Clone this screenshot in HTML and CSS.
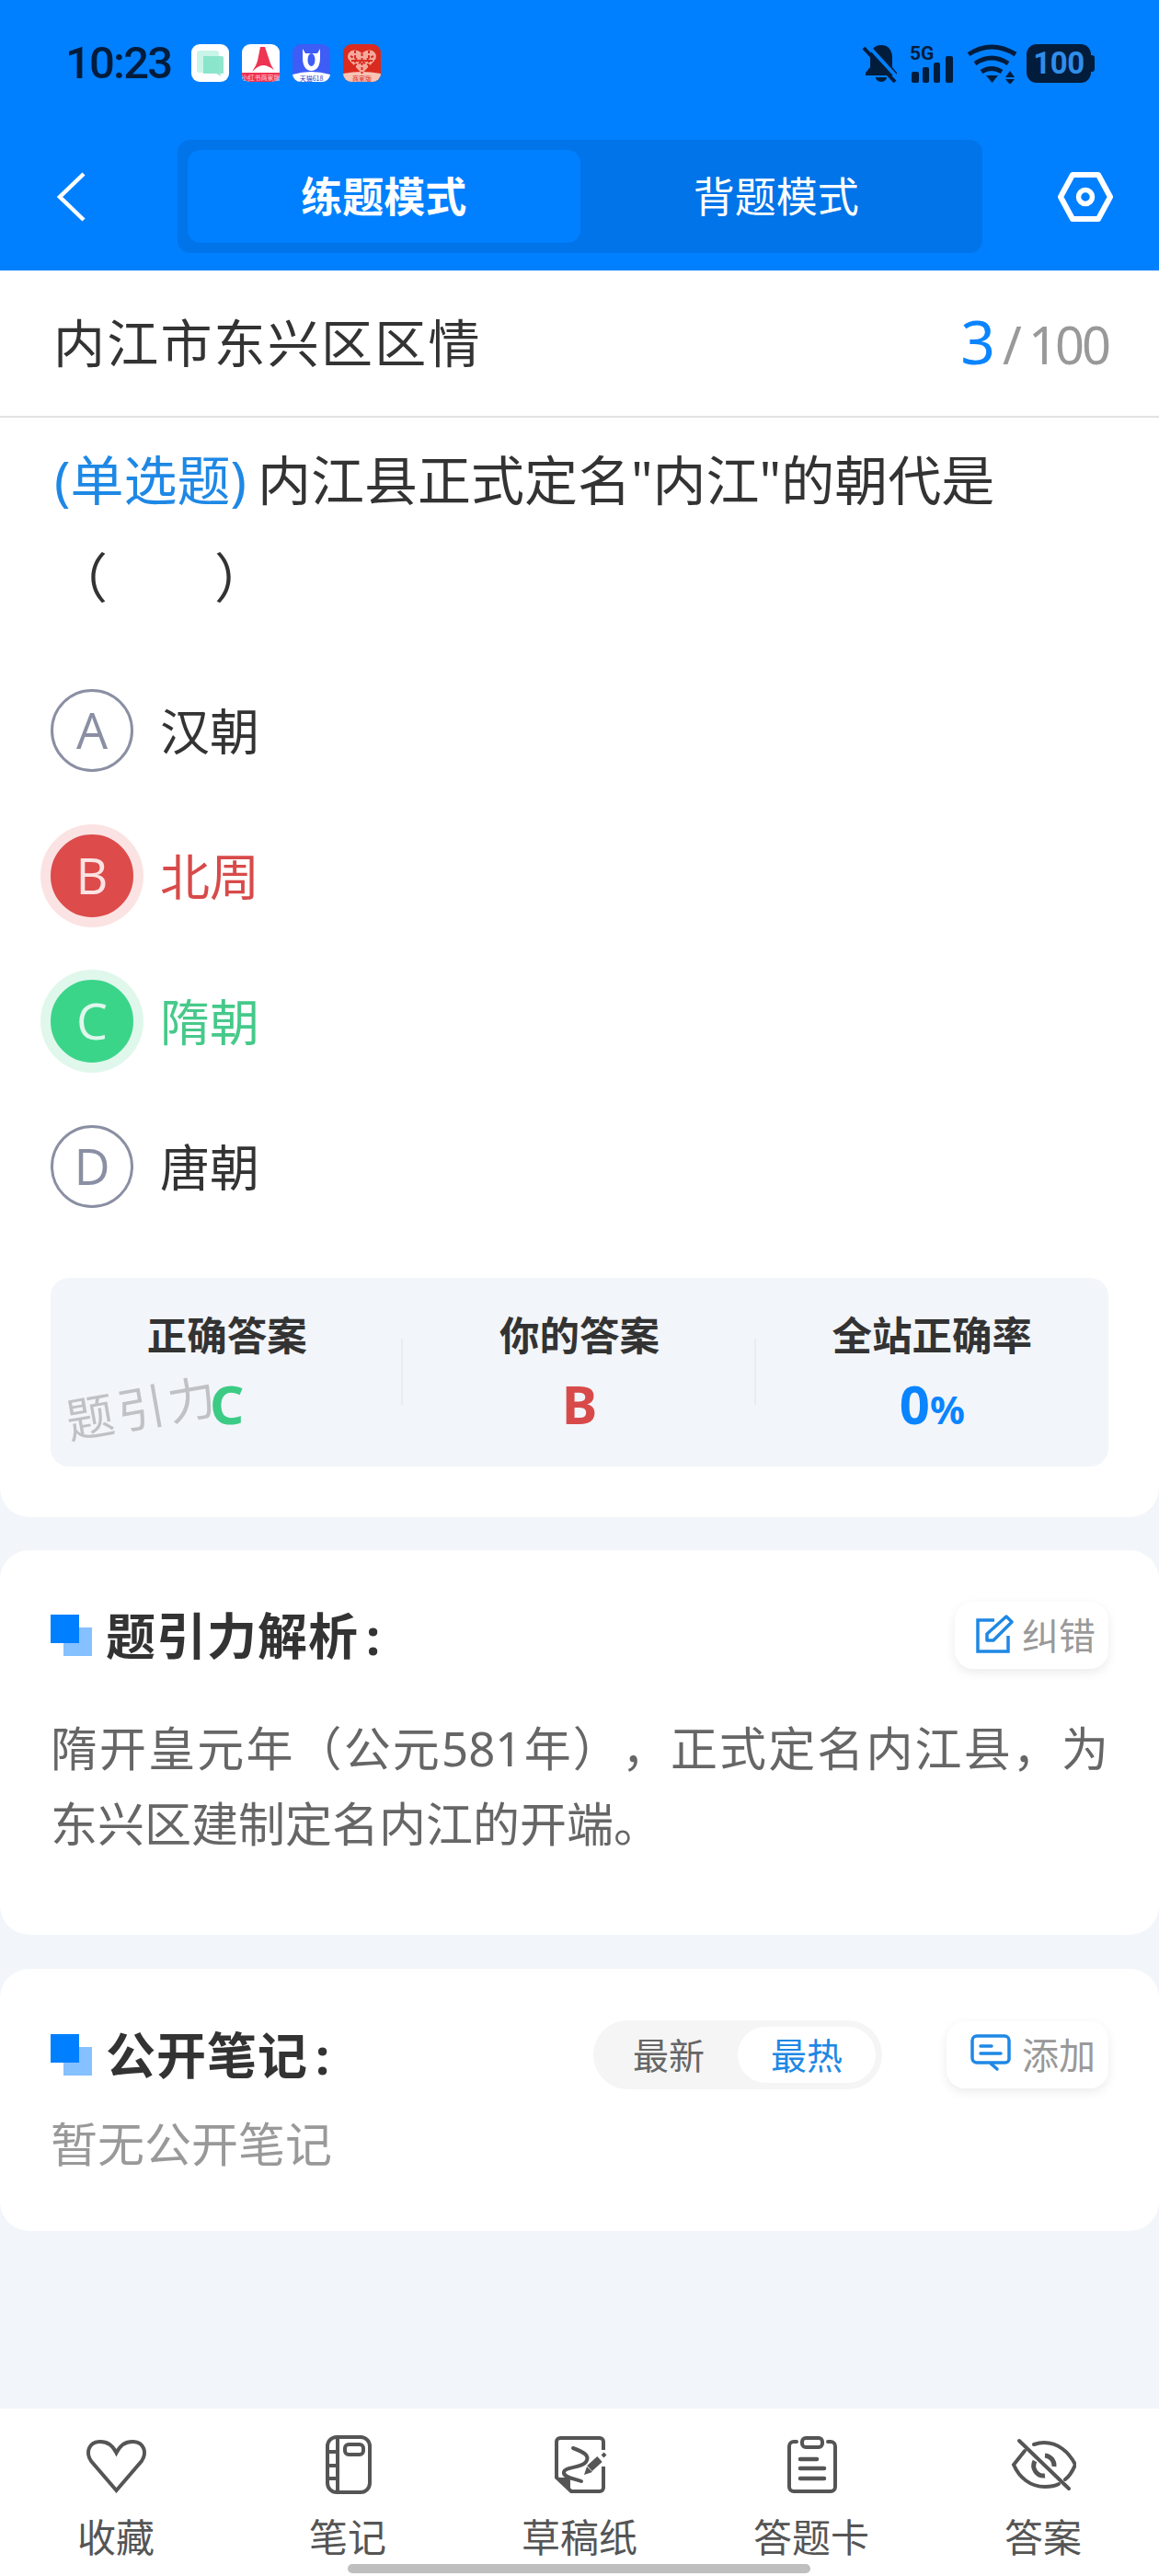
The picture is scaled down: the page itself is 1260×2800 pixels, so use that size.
FILE: index.html

```html
<!DOCTYPE html>
<html lang="zh-CN">
<head>
    <meta charset="UTF-8">
    <meta name="viewport" content="width=device-width, initial-scale=1.0">
    <title>练题模式</title>
    <link rel="stylesheet" href="styles.css">
</head>
<body>

    <!-- BLUE HEADER -->
    <header class="header">
        <div class="status">
            <span class="time">10:23</span>
            <div class="apps">
                <svg class="app" viewBox="0 0 41 41"><rect width="41" height="41" rx="9" fill="#fff"/><rect x="6" y="7" width="24" height="24" rx="3" fill="#c9f5e8"/><path d="M13 13h20a2 2 0 0 1 2 2v17h-4l2 3-6-3H13z" fill="#7fe2c5" opacity=".85"/></svg>
                <svg class="app" viewBox="0 0 41 41"><rect width="41" height="41" rx="9" fill="#fff"/><path d="M0 31h41v1a9 9 0 0 1-9 9H9a9 9 0 0 1-9-9z" fill="#f0304f"/><path d="M20 3h5l5 15c1 4 3 7 5 10-4-3-8-5-12-5-4 0-8 3-12 7 3-5 5-8 6-12z" fill="#ef3352"/><text x="20.500" y="39" class="app-label" fill="#ffd5dc">小红书商家版</text></svg>
                <svg class="app" viewBox="0 0 41 41"><rect width="41" height="41" rx="9" fill="#3e5cf6"/><path d="M0 33q20-6 41 0v0a9 9 0 0 1-9 8H9a9 9 0 0 1-9-8z" fill="#fff"/><path d="M11 5l3 5h13l3-5v10c0 9-4 14-9.500 14S11 24 11 15z" fill="#fff"/><ellipse cx="20.500" cy="17" rx="4" ry="7" fill="#3e5cf6"/><text x="20.500" y="39.500" class="app-label" fill="#2740c8">天猫618</text></svg>
                <svg class="app" viewBox="0 0 41 41"><rect width="41" height="41" rx="9" fill="#d92b1f"/><path d="M0 32q20-4 41 0a9 9 0 0 1-9 9H9a9 9 0 0 1-9-9z" fill="#f7c4b6"/><path d="M20.500 32L6 17C2 9 12 2 20.500 10 29 2 39 9 35 17z" fill="#f4a99c"/><path d="M20.500 10v22M8 13l25 12M33 13L8 25M4 18h33M13 7v18M28 7v18" stroke="#d92b1f" stroke-width="2" stroke-dasharray="3 2"/><text x="20.500" y="39.500" class="app-label" fill="#d92b1f">商家版</text></svg>
            </div>
            <div class="status-right">
                <svg class="bell" viewBox="0 0 42 44"><path d="M21 2c-8 0-12 6-12 14v10l-5 6v3h34v-3l-5-6V16c0-8-4-14-12-14zM15 37a6 5 0 0 0 12 0z" fill="#021c3c"/><path d="M7 3l33 36" stroke="#0080ff" stroke-width="4"/><path d="M2 5l34 37" stroke="#021c3c" stroke-width="4"/></svg>
                <svg class="signal" viewBox="0 0 52 44"><text x="1" y="18" class="signal-label">5G</text><rect x="3" y="31" width="8" height="12" rx="2"/><rect x="15" y="26" width="7" height="17" rx="2"/><rect x="27" y="21" width="7" height="22" rx="2"/><rect x="40" y="14" width="8" height="29" rx="2"/></svg>
                <svg class="wifi" viewBox="0 0 58 44"><g fill="none" stroke="#021c3c" stroke-width="5"><path d="M3 12q25-16 51 0"/><path d="M10 22q18-12 36 0"/><path d="M17 31q11-7 22 0"/></g><path d="M22 35h13l-6.500 8zM43 37l5-7 5 7zM43 39h10l-5 6z" fill="#021c3c"/></svg>
                <div class="battery">100</div>
            </div>
        </div>
        <nav class="nav">
            <svg class="back" viewBox="0 0 32 56"><polyline points="29,3 3,28 29,53" fill="none" stroke="#fff" stroke-width="4.500"/></svg>
            <div class="tabs">
                <div class="tab active">练题模式</div>
                <div class="tab">背题模式</div>
            </div>
            <svg class="setting" viewBox="0 0 60 56"><path d="M16 4h28l13 24-13 24H16L3 28z" fill="none" stroke="#fff" stroke-width="6" stroke-linejoin="round"/><circle cx="30" cy="28" r="7.500" fill="none" stroke="#fff" stroke-width="5.500"/></svg>
        </nav>
    </header>

    <main class="main">
        <!-- QUESTION -->
        <section class="card question-card">
            <div class="subject">
                <h1>内江市东兴区区情</h1>
                <p class="progress"><b>3</b><span>/</span>100</p>
            </div>
            <p class="question"><span class="q-type">(单选题)</span> 内江县正式定名"内江"的朝代是（　　）</p>

            <div class="option"><span class="mark">A</span><span class="option-text">汉朝</span></div>
            <div class="option wrong"><span class="mark">B</span><span class="option-text">北周</span></div>
            <div class="option right"><span class="mark">C</span><span class="option-text">隋朝</span></div>
            <div class="option"><span class="mark">D</span><span class="option-text">唐朝</span></div>

            <div class="stats">
                <div class="stat">
                    <p class="stat-name">正确答案</p>
                    <p class="stat-value green">C</p>
                </div>
                <div class="stat">
                    <p class="stat-name">你的答案</p>
                    <p class="stat-value red">B</p>
                </div>
                <div class="stat">
                    <p class="stat-name">全站正确率</p>
                    <p class="stat-value blue">0<small>%</small></p>
                </div>
                <span class="watermark">题引力</span>
            </div>
        </section>

        <!-- ANALYSIS -->
        <section class="card block analysis">
            <div class="block-head">
                <svg class="squares" viewBox="0 0 45 45"><rect x="14" y="14" width="31" height="31" fill="#85c0ff"/><rect width="31" height="31" fill="#0080ff"/></svg>
                <h2>题引力解析<span class="colon">:</span></h2>
                <div class="chip">
                    <svg class="chip-icon" viewBox="0 0 44 44"><path d="M21 7H3v34h33V24" fill="none" stroke="#1e88e5" stroke-width="3.500"/><path d="M13 29v-7L34 3l6 6-20 20z" fill="none" stroke="#1e88e5" stroke-width="3.500" stroke-linejoin="round"/></svg>
                    纠错
                </div>
            </div>
            <p class="analysis-text">隋开皇元年（公元581年），正式定名内江县，为东兴区建制定名内江的开端。</p>
        </section>

        <!-- NOTES -->
        <section class="card block notes">
            <div class="block-head">
                <svg class="squares" viewBox="0 0 45 45"><rect x="14" y="14" width="31" height="31" fill="#85c0ff"/><rect width="31" height="31" fill="#0080ff"/></svg>
                <h2>公开笔记<span class="colon">:</span></h2>
                <div class="sort">
                    <span>最新</span>
                    <span class="on">最热</span>
                </div>
                <div class="chip chip-add">
                    <svg class="chip-icon" viewBox="0 0 46 44"><path d="M8 3h30a5 5 0 0 1 5 5v20a4 4 0 0 1-4 4H22l8 7M20 32H8a5 5 0 0 1-5-5V8a5 5 0 0 1 5-5" fill="none" stroke="#1e88e5" stroke-width="3.500" stroke-linecap="round"/><path d="M12 14h12M12 22h22" stroke="#1e88e5" stroke-width="3.500" stroke-linecap="round"/></svg>
                    添加
                </div>
            </div>
            <p class="empty">暂无公开笔记</p>
        </section>
    </main>

    <!-- BOTTOM BAR -->
    <footer class="bar">
        <div class="bar-item">
            <svg viewBox="0 0 72 66"><path d="M36.500 62L9 30C3 21 6 10 18 9c9-.500 15 5 18.500 12C40 14 46 8.500 55 9c12 1 15 12 9 21z"/></svg>
            收藏
        </div>
        <div class="bar-item">
            <svg viewBox="0 0 72 66"><rect x="14" y="4" width="46" height="60" rx="10"/><path d="M25 4v60M14 20h11M14 35h11M14 49h11"/><rect x="33" y="12" width="20" height="11" rx="4"/></svg>
            笔记
        </div>
        <div class="bar-item">
            <svg viewBox="0 0 72 66"><path d="M62 18V9a4 4 0 0 0-4-4H15a4 4 0 0 0-4 4v39l16 15h31a4 4 0 0 0 4-4V36"/><path class="solid" d="M11 48h11a4 4 0 0 1 4 4v10z"/><path d="M29 16c11 4 19 8 14 15s-23 5-24 11 11 7 19 10" stroke-linecap="round"/><path d="M47 38l11-10" stroke-width="8"/><path class="solid" d="M41 45l3-9 6 6z"/><path d="M61 25l3-3"/></svg>
            草稿纸
        </div>
        <div class="bar-item">
            <svg viewBox="0 0 72 66"><path d="M20 9h-3a5 5 0 0 0-5 5v44a5 5 0 0 0 5 5h40a5 5 0 0 0 5-5V14a5 5 0 0 0-5-5h-3" stroke-linecap="round"/><rect x="26" y="5" width="22" height="10" rx="4"/><path d="M24 28h18M24 38h26M24 49h26" stroke-width="4.500" stroke-linecap="round"/></svg>
            答题卡
        </div>
        <div class="bar-item">
            <svg viewBox="0 0 72 66"><path d="M16 19L4 34c6 14 18 24 34 24 6 0 11-1 15-3" stroke-linecap="round"/><path d="M26 12c3-1 7-2 11-2 15 0 27 10 34 24-3 7-7 13-11 16" stroke-linecap="round"/><path d="M10 8l54 52" stroke-linecap="round"/><path d="M38 24a11 11 0 0 1 10 12M27 30a11 11 0 0 0 11 16" stroke-width="5"/></svg>
            答案
        </div>
        <span class="home-line"></span>
    </footer>

</body>
</html>
```

FILE: styles.css

```css
* { margin: 0; padding: 0; box-sizing: border-box; }
body {
    width: 1260px;
    height: 2800px;
    overflow: hidden;
    display: flex;
    flex-direction: column;
    background: #f2f5f9;
    color: #333;
    font-family: "Noto Sans", "Noto Sans CJK SC", sans-serif;
    text-spacing-trim: space-all;
}

/* header */
.header {
    height: 294px;
    background: #0080ff;
    padding-top: 48px;
}
.status {
    display: flex;
    align-items: center;
    height: 41px;
    padding: 0 70px 0 71px;
}
.time {
    width: 116px;
    font-family: Roboto, sans-serif;
    font-size: 49px;
    font-weight: 500;
    line-height: 41px;
    letter-spacing: -1.800px;
    color: #021c3c;
    white-space: nowrap;
}
.apps { display: flex; gap: 14px; margin-left: 21px; }
.app { width: 41px; height: 41px; display: block; }
.app-label { font-size: 7px; text-anchor: middle; font-family: "Noto Sans CJK SC", sans-serif; }
.status-right { display: flex; align-items: center; margin-left: auto; }
.bell { width: 42px; height: 44px; }
.signal { width: 52px; height: 44px; margin-left: 9px; fill: #021c3c; }
.signal-label { font-family: Roboto, sans-serif; font-size: 21px; font-weight: 700; }
.wifi { width: 58px; height: 44px; margin-left: 10px; }
.battery {
    position: relative;
    width: 70px;
    height: 42px;
    margin-left: 8px;
    margin-right: 4px;
    background: #021c3c;
    border-radius: 11px;
    color: #2f8eea;
    font-family: Roboto, sans-serif;
    font-size: 33px;
    font-weight: 700;
    line-height: 42px;
    text-align: center;
    letter-spacing: -.5px;
}
.battery::after {
    content: "";
    position: absolute;
    left: 70px;
    top: 12px;
    width: 4px;
    height: 18px;
    background: #021c3c;
    border-radius: 0 3px 3px 0;
}
.nav {
    display: flex;
    align-items: center;
    height: 123px;
    margin-top: 63px;
    padding: 0 50px 0 62px;
}
.back { width: 32px; height: 56px; }
.tabs {
    display: flex;
    width: 875px;
    height: 123px;
    margin-left: 99px;
    padding: 11px;
    background: #0074e8;
    border-radius: 14px;
}
.tab {
    flex: 1;
    border-radius: 14px;
    color: #fff;
    font-size: 45px;
    line-height: 101px;
    text-align: center;
}
.tab.active { background: #0080ff; font-weight: 700; }
.setting { width: 60px; height: 56px; margin-left: auto; }

/* cards */
.main { flex: 1; }
.card { background: #fff; border-radius: 0 0 32px 32px; }
.question-card { height: 1355px; }
.subject {
    display: flex;
    justify-content: space-between;
    align-items: center;
    height: 160px;
    padding: 0 55px 7px 58px;
    border-bottom: 2px solid #e2e2e2;
}
.subject h1 { font-size: 56px; font-weight: 400; letter-spacing: 2.200px; }
.progress { color: #999; font-size: 56px; letter-spacing: -3px; }
.progress b { color: #0a84ff; font-size: 66px; font-weight: 400; letter-spacing: 0; }
.progress span { margin: 0 10px 0 8px; }
.question {
    margin-bottom: 34px;
    padding: 15px 40px 0 59px;
    font-size: 58px;
    line-height: 106px;
    word-spacing: -3px;
}
.q-type { color: #1e88e5; }
.option {
    display: flex;
    align-items: center;
    height: 158px;
    padding-left: 55px;
    font-size: 54px;
    color: #333;
}
.option-text { padding-bottom: 4px; }
.mark {
    width: 90px;
    height: 90px;
    margin-right: 29px;
    border: 3px solid #8a8fa3;
    border-radius: 50%;
    color: #8a8fa3;
    font-family: "Open Sans", sans-serif;
    font-size: 54px;
    line-height: 82px;
    text-align: center;
}
.wrong { color: #d84a4a; }
.wrong .mark {
    background: #dd4b4b;
    border-color: #dd4b4b;
    color: #fbe3e3;
    box-shadow: 0 0 0 11px #fbe3e3;
}
.right { color: #46c98a; }
.right .mark {
    background: #3bd58a;
    border-color: #3bd58a;
    color: #dff7ec;
    box-shadow: 0 0 0 11px #e0f7ec;
}

/* answer summary */
.stats {
    position: relative;
    display: grid;
    grid-template-columns: repeat(3, 1fr);
    height: 205px;
    margin: 42px 55px 0;
    background: #f2f5f9;
    border-radius: 20px;
}
.stat { position: relative; padding-top: 32px; text-align: center; }
.stat + .stat::before {
    content: "";
    position: absolute;
    left: -2px;
    top: 66px;
    width: 2px;
    height: 72px;
    background: #e9ecf0;
}
.stat-name { font-size: 43.500px; font-weight: 700; line-height: 60px; }
.stat-value { margin-top: 10px; font-size: 58px; font-weight: 700; line-height: 70px; }
.stat-value small { font-size: 42px; }
.green { color: #3bcb85; }
.red { color: #d84a4a; }
.blue { color: #0a84ff; }
.watermark {
    position: absolute;
    left: 16px;
    top: 111px;
    color: #bfc1c4;
    font-size: 52px;
    letter-spacing: 4px;
    line-height: 60px;
    transform: rotate(-10deg);
}

.block { margin-top: 36px; padding: 56px 55px 0; border-radius: 32px; }
.analysis { height: 418px; }
.notes { height: 285px; margin-top: 37px; }
.block-head { display: flex; align-items: center; height: 73px; }
.notes .block-head { height: 75px; }
.squares { width: 45px; height: 45px; margin-right: 15px; }
.block-head h2 { padding-bottom: 4px; font-size: 54px; font-weight: 700; letter-spacing: 1px; }
.colon { margin-left: 8px; }
.chip {
    display: flex;
    align-items: center;
    height: 73px;
    margin-left: auto;
    padding: 0 14px 3px 22px;
    background: #fff;
    border-radius: 20px;
    box-shadow: 0 4px 12px rgba(0, 0, 0, 0.08);
    color: #999;
    font-size: 40px;
    white-space: nowrap;
}
.chip-icon { width: 44px; height: 44px; margin-right: 7px; }
.chip-add { margin-left: 70px; padding: 0 14px 3px 25px; }
.chip-add .chip-icon { width: 46px; margin-right: 11px; }
.analysis-text {
    margin-top: 45px;
    color: #666;
    font-size: 51px;
    line-height: 82px;
    text-align: justify;
}
.sort {
    display: flex;
    align-items: center;
    width: 314px;
    height: 75px;
    margin-left: auto;
    padding: 0 7px;
    background: #f5f5f5;
    border-radius: 38px;
    color: #666;
    font-size: 39px;
}
.sort span { flex: 1; line-height: 61px; text-align: center; border-radius: 31px; }
.sort .on { background: #fff; color: #1e88e5; }
.empty { margin-top: 29px; color: #999; font-size: 51px; line-height: 60px; }

/* bottom bar */
.bar {
    position: relative;
    display: grid;
    grid-template-columns: repeat(5, 1fr);
    height: 182px;
    padding-top: 27px;
    background: #fff;
}
.bar-item {
    display: flex;
    flex-direction: column;
    align-items: center;
    color: #555;
    font-size: 42px;
    line-height: 50px;
}
.bar-item svg {
    width: 72px;
    height: 66px;
    margin-bottom: 22px;
    fill: none;
    stroke: #555;
    stroke-width: 4;
}
.bar-item svg .solid { fill: #555; stroke: none; }
.home-line {
    position: absolute;
    left: 378px;
    top: 169px;
    width: 503px;
    height: 10px;
    background: #bfbfbf;
    border-radius: 5px;
}
```
